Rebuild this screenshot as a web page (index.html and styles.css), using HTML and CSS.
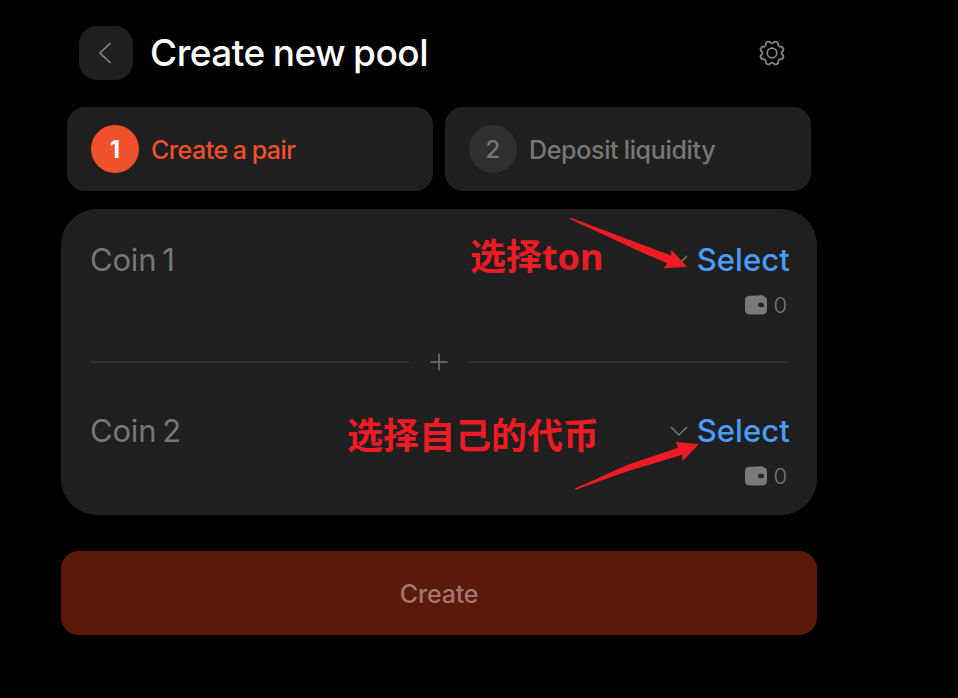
FILE: index.html
```html
<!DOCTYPE html>
<html lang="en">
<head>
<meta charset="utf-8">
<title>Create new pool</title>
<link rel="stylesheet" href="styles.css">
</head>
<body>
<main class="page">
  <header class="header">
    <button class="back" aria-label="Back">
      <svg width="54" height="54" viewBox="0 0 54 54"><path d="M31.500 17 21 27l10.500 10"/></svg>
    </button>
    <h1 class="title">Create new pool</h1>
    <svg class="gear" width="28" height="28" viewBox="-14.600 -14.600 29.200 29.200">
      <defs><path id="tooth" d="M0-10C1.400-10 1.600-11.300 2.950-11.840C3.900-12.200 5.900-11.400 6.280-10.460C6.850-9.100 6.080-8.060 7.070-7.070"/></defs>
      <use href="#tooth"/><use href="#tooth" transform="rotate(45)"/><use href="#tooth" transform="rotate(90)"/><use href="#tooth" transform="rotate(135)"/><use href="#tooth" transform="rotate(180)"/><use href="#tooth" transform="rotate(225)"/><use href="#tooth" transform="rotate(270)"/><use href="#tooth" transform="rotate(315)"/>
      <circle r="5"/>
    </svg>
  </header>

  <nav class="steps">
    <div class="step active"><span class="num">1</span><span class="step-label">Create a pair</span></div>
    <div class="step"><span class="num">2</span><span class="step-label deposit">Deposit liquidity</span></div>
  </nav>

  <section class="card">
    <div class="coin">
      <div class="row">
        <span class="coin-name">Coin 1</span>
        <span class="select"><svg width="18" height="12" viewBox="0 0 18 12"><path d="M1 2 9 10l8-8"/></svg><span class="select-text">Select</span></span>
      </div>
      <div class="balance">
        <svg width="22" height="20" viewBox="0 0 22 20"><path fill="#7c797a" d="M4.500.8 16.500.2q2 0 2.600 1.400Q22 2.400 22 5.500v9q0 5-5 5H5q-5 0-5-5V5Q0 1.200 4.500.8Z"/><rect x="13" y="7.700" width="6" height="4.600" rx="2.300" fill="#242324"/></svg>
        <span>0</span>
      </div>
    </div>
    <div class="divider">
      <span class="line"></span>
      <svg width="18" height="18" viewBox="0 0 18 18"><path d="M9 .5v17M.5 9h17"/></svg>
      <span class="line"></span>
    </div>
    <div class="coin">
      <div class="row">
        <span class="coin-name">Coin 2</span>
        <span class="select"><svg width="18" height="12" viewBox="0 0 18 12"><path d="M1 2 9 10l8-8"/></svg><span class="select-text">Select</span></span>
      </div>
      <div class="balance">
        <svg width="22" height="20" viewBox="0 0 22 20"><path fill="#7c797a" d="M4.500.8 16.500.2q2 0 2.600 1.400Q22 2.400 22 5.500v9q0 5-5 5H5q-5 0-5-5V5Q0 1.200 4.500.8Z"/><rect x="13" y="7.700" width="6" height="4.600" rx="2.300" fill="#242324"/></svg>
        <span>0</span>
      </div>
    </div>
  </section>

  <button class="create">Create</button>

  <svg class="arrows" width="958" height="698" viewBox="0 0 958 698">
    <path d="M570 218 571.500 218 671 255.500 671.300 249.700 687.200 267 663.700 268.200 667.300 263.300 642 252.500 570.500 219.200Z"/>
    <path d="M575 488.500 627 465 678 447.700 675.700 442 699 444 682.700 460.900 682 454.700 627 471.500 575.500 489.800Z"/>
  </svg>
  <span class="note note-ton">选择ton</span>
  <span class="note note-token">选择自己的代币</span>
</main>
</body>
</html>
```
FILE: styles.css
```css
* { box-sizing: border-box; }
body { margin: 0; background: #000; font-family: Inter, sans-serif; }
button { border: 0; padding: 0; font-family: inherit; }
svg { display: block; flex: none; fill: none; }

.page { position: relative; width: 958px; height: 698px; padding: 26px 141px 0 61px; overflow: hidden; }

.header { display: flex; align-items: center; height: 54px; padding: 0 31px 0 18px; }
.back { width: 54px; height: 54px; border-radius: 18px; background: #1f1f1f; }
.back path { stroke: #858585; stroke-width: 1.7; }
.title { margin: 0 auto 0 17px; font-size: 37px; line-height: 54px; font-weight: 500; letter-spacing: -0.500px; word-spacing: -1.500px; color: #fff; white-space: nowrap; }
.gear { stroke: #858585; stroke-width: 1.900; }

.steps { display: flex; gap: 12px; margin: 27px 6px 18px; }
.step { flex: 1; display: flex; align-items: center; gap: 12px; height: 84px; padding: 0 24px; border-radius: 18px; background: #1f1f1f; color: #777; font-size: 24px; white-space: nowrap; }
.num { width: 48px; height: 48px; border-radius: 50%; background: #2f2f2f; line-height: 49px; text-align: center; font-weight: 500; }
.active { color: #f0512d; }
.active .num { background: #f0512d; color: #fff; font-weight: 700; }
.step-label { padding-top: 1px; font-size: 25px; font-weight: 450; letter-spacing: -0.500px; word-spacing: -1px; }
.deposit { letter-spacing: -0.320px; }

.card { height: 306px; padding: 30px 28px 0 30px; border-radius: 36px; background: #1f1f1f; }
.row { display: flex; justify-content: space-between; align-items: center; height: 42px; font-size: 31px; }
.coin-name { margin-left: -1px; padding-bottom: 1px; color: #777; letter-spacing: -0.200px; word-spacing: -2.500px; }
.select { display: flex; align-items: center; gap: 9px; color: #4a9dff; }
.select path { stroke: #777; stroke-width: 1.5; }
.select-text { margin-right: -1px; padding-bottom: 1px; font-weight: 450; letter-spacing: 0.100px; }
.balance { display: flex; justify-content: flex-end; align-items: center; gap: 6px; height: 30px; margin-top: 9px; padding-right: 2px; color: #7c797a; font-size: 22px; font-weight: 300; }
.divider { display: flex; align-items: center; justify-content: space-between; height: 18px; margin: 33px 2px 39px 0; }
.divider path { stroke: #777; stroke-width: 1.5; }
.line { width: 318px; height: 2px; background: #2f2f2f; }

.create { display: block; width: 756px; height: 84px; margin-top: 36px; padding-top: 1px; border-radius: 18px; background: #5b190a; color: #a3756c; font-size: 25px; font-weight: 500; letter-spacing: -0.200px; }

.arrows { position: absolute; left: 0; top: 0; fill: #ed1c24; pointer-events: none; }
.note { position: absolute; color: #ed1c24; font: 700 36px/48px "Noto Sans", "Noto Sans CJK SC", sans-serif; white-space: nowrap; }
.note-ton { left: 470px; top: 233px; }
.note-token { left: 347px; top: 412px; }
```
